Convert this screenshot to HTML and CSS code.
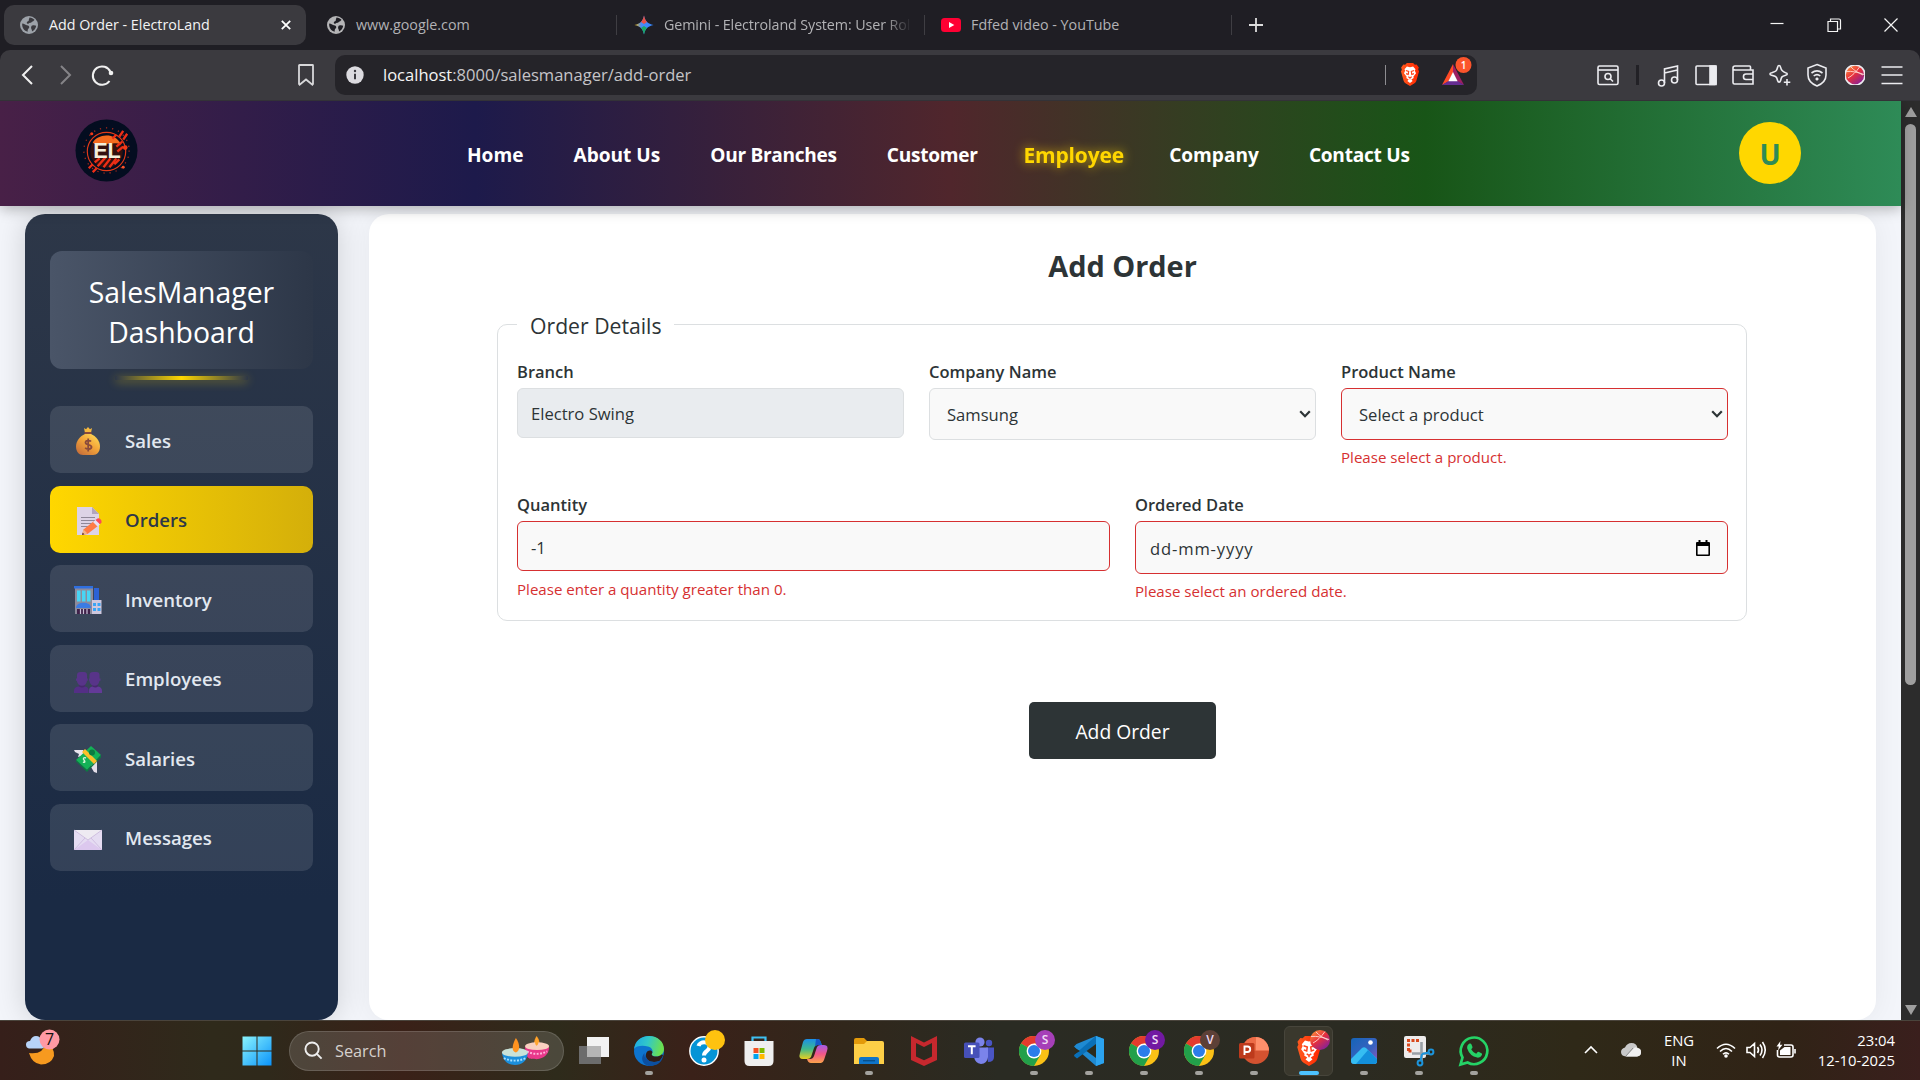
FILE: index.html
```html
<!DOCTYPE html>
<html lang="en">
<head>
<meta charset="utf-8">
<title>Add Order - ElectroLand</title>
<link rel="stylesheet" href="styles.css">
</head>
<body>
<svg class="defs" width="0" height="0" aria-hidden="true">
  <defs>
    <linearGradient id="gWin" x1="0" y1="0" x2="1" y2="1"><stop offset="0" stop-color="#8af4fd"/><stop offset="1" stop-color="#0a93fb"/></linearGradient>
    <linearGradient id="gFire" x1="0" y1="0" x2=".8" y2="1"><stop offset="0" stop-color="#ffa63c"/><stop offset=".5" stop-color="#e8303c"/><stop offset="1" stop-color="#7b1fa2"/></linearGradient>
    <linearGradient id="gBrave" x1="0" y1="0" x2="1" y2="0"><stop offset="0" stop-color="#ff5a1f"/><stop offset="1" stop-color="#ff2600"/></linearGradient>
    <linearGradient id="gGold" x1="1" y1="0" x2="0.2" y2="1"><stop offset="0" stop-color="#ffe35a"/><stop offset=".5" stop-color="#f4a63a"/><stop offset="1" stop-color="#c8703a"/></linearGradient>
    <symbol id="globe" viewBox="0 0 20 20">
      <circle cx="10" cy="10" r="9" fill="currentColor"/>
      <path d="M3.2 8.6c2.3.3 2.6 1.400 4.600 1.600 2 .2 2.600 1 2.400 2.200-.2 1.200-1.700 1-1.500 4.400-3.400-.6-5.900-4-5.500-8.200zM10.500 2.600c2 0 3.800.9 5.100 2.400-.8.200-1 1.300-2 1.500-1.100.2-1.100 1.400-2.400 1.300-1.500-.1-1.300 1.300-2.500 1-1.200-.2-1.200-1.800-.2-2.400 1-.5 1.500-.6 1.300-1.700zM13.200 10.500c1.500-.5 2.800-.3 4 .2-.3 2.600-2 4.700-4.200 5.700.3-1.600-.9-2.300-.9-3.500 0-1.200.3-2 1.100-2.400z" fill="var(--cut)"/>
    </symbol>
    <symbol id="lion" viewBox="0 0 22 26">
      <path d="M5.500 2 7.500 0h7l2 2 2-.3L21 5l-.8 2 1 2.500-3 10.500c-.6 1.500-1.500 2.400-2.500 3.100L11 26l-4.700-2.900c-1-.7-1.900-1.600-2.500-3.100L.8 9.500l1-2L1 5l2.500-3.300z" fill="url(#gBrave)"/>
      <path d="m7.500 4 3.500.7 3.500-.7 2.700 3.200-.7 1.500 1.300 2.800-3 4 .4 1.500-2.700 1.700 1.500 1.600L11 22.600l-3-2.300 1.500-1.600L6.800 17l.4-1.500-3-4 1.300-2.800-.7-1.500z" fill="#fff"/>
      <path d="m6.300 8.500 3.200 1-.5 3.500L6.500 12m9.200-3.500-3.200 1 .5 3.500 2.500-1M9 15.500l2 1.200 2-1.200M11 16.500v2" fill="none" stroke="#ff431a" stroke-width="1.300"/>
    </symbol>
    <symbol id="chrome" viewBox="0 0 30 30">
      <circle cx="15" cy="15" r="15" fill="#fbc116"/>
      <path d="M15 15 2 7.500A15 15 0 0 1 28 7.500H15z" fill="#e33b2e"/>
      <path d="M2 7.500A15 15 0 0 0 15 30l6.500-11.300L15 15z" fill="#22a04a"/>
      <path d="M15 7.500h13l-6.500 11.200z" fill="#fbc116"/>
      <circle cx="15" cy="15" r="7.400" fill="#fff"/><circle cx="15" cy="15" r="6" fill="#2b7de9"/>
    </symbol>
    <symbol id="ball" viewBox="0 0 20 20">
      <circle cx="10" cy="10" r="10" fill="url(#gFire)"/>
      <path d="M1 6.500c6-.5 11 .5 18 3M3 13c4-2 8-6 12-11.500M6 2c3 3.500 7 5.500 12 8" stroke="#ffd9d0" stroke-width=".9" fill="none"/>
    </symbol>
  </defs>
</svg>

<div class="tabs">
  <div class="tab tab-active"><svg class="fav fav-dim" viewBox="0 0 20 20"><use href="#globe"/></svg><span class="tab-text">Add Order - ElectroLand</span><svg class="tab-close" viewBox="0 0 10 10"><path d="m.8.8 8.400 8.400M9.200.8.800 9.200"/></svg></div>
  <div class="tab tab-google"><svg class="fav fav-gray" viewBox="0 0 20 20"><use href="#globe"/></svg><span class="tab-text">www.google.com</span></div>
  <div class="tab tab-gemini">
    <svg class="fav" viewBox="0 0 20 20"><defs><linearGradient id="gGem" x1="0" y1="0" x2="1" y2="0"><stop offset="0" stop-color="#fbbc05"/><stop offset=".35" stop-color="#4a8af4"/><stop offset="1" stop-color="#3186ff"/></linearGradient></defs><path d="M10 .5c1 5.500 4 8.500 9.500 9.500-5.500 1-8.500 4-9.500 9.500C9 14 6 11 .5 10 6 9 9 6 10 .5z" fill="url(#gGem)"/><path d="M10 .5c.6 3 1.500 5 3 6.500L10 9 7 7c1.500-1.500 2.400-3.500 3-6.500z" fill="#ea4f45"/><path d="M10 19.500c.6-3 1.500-5 3-6.500l-3-2-3 2c1.500 1.500 2.400 3.500 3 6.500z" fill="#19a866"/></svg>
    <span class="tab-text tab-fade">Gemini - Electroland System: User Rol</span>
  </div>
  <div class="tab tab-youtube"><svg class="fav-yt" viewBox="0 0 20 14"><rect width="20" height="14" rx="3.500" fill="#ff0033"/><path d="m8 4 5.300 3L8 10z" fill="#fff"/></svg><span class="tab-text">Fdfed video - YouTube</span></div>
  <svg class="new-tab" viewBox="0 0 14 14"><path d="M7 0v14M0 7h14"/></svg>
  <div class="win-controls">
    <svg viewBox="0 0 14 14"><path d="M.5 5.500h13"/></svg>
    <svg viewBox="0 0 14 14"><path d="M1 3.500h9.500v10H1zM3.500 3.500V1h8.500q1.500 0 1.500 1.500V11h-3"/></svg>
    <svg viewBox="0 0 14 14"><path d="m.5.5 13 13M13.500.5l-13 13"/></svg>
  </div>
</div>

<div class="toolbar">
  <div class="nav-buttons">
    <svg viewBox="0 0 24 24"><path d="m16 3-9 9 9 9"/></svg>
    <svg class="dim" viewBox="0 0 24 24"><path d="m8 3 9 9-9 9"/></svg>
    <svg viewBox="0 0 24 24"><path d="M19.500 18A9.200 9.200 0 1 1 20.500 9"/><circle cx="21" cy="10" r="2.300" fill="#f0f0f0" stroke="none"/></svg>
  </div>
  <svg class="bookmark" viewBox="0 0 16 22"><path d="M1 1.500q0-.5.500-.5h13q.5 0 .5.500V20l-.6.700L8 15.500l-6.400 5.200L1 20z"/></svg>
  <div class="urlbar">
    <svg class="info" viewBox="0 0 18 18"><circle cx="9" cy="9" r="8.700" fill="#dcdbe0"/><path d="M9 7.800v5.400" stroke="#3a393e" stroke-width="2"/><circle cx="9" cy="5" r="1.200" fill="#3a393e"/></svg>
    <span class="url"><b>localhost</b>:8000/salesmanager/add-order</span>
    <i class="url-sep"></i>
    <svg class="shield-lion" viewBox="0 0 22 26"><use href="#lion"/></svg>
    <svg class="rewards" viewBox="0 0 32 28"><path d="M12 6 1 27l6.500-3.500L12 15z" fill="#ff4a26"/><path d="m12 6 11 21-6.500-3.500L12 15z" fill="#9e1f63"/><path d="M1 27h22l-6.500-4h-9z" fill="#662d91"/><path d="m12 14 4.600 9.200H7.400z" fill="#fff"/><circle cx="22.500" cy="7" r="8" fill="#fb542b"/><text x="22.500" y="10.700" text-anchor="middle">1</text></svg>
  </div>
  <div class="tool-icons">
    <svg viewBox="0 0 22 22"><rect x="1" y="2" width="20" height="18.500" rx="1.500"/><path d="M1 6h20"/><circle cx="11" cy="12.500" r="3"/><path d="m13 14.500 3 3"/></svg>
    <i class="tool-sep"></i>
    <svg viewBox="0 0 22 22"><circle cx="4.500" cy="19" r="3"/><circle cx="17.500" cy="16" r="3"/><path d="M7.500 19V5l13-3v14M7.500 9l13-3"/></svg>
    <svg viewBox="0 0 22 22"><rect x="1" y="2" width="20" height="18.500" rx="1"/><path d="M15 2h6v18.500h-6z" fill="#ececf0"/></svg>
    <svg viewBox="0 0 22 22"><path d="M21 7V20H2.500Q1 20 1 18.500V4Q1 2 3 2h14.500q1 0 1 1v2.500M1 5.500Q2 6 3 6h18v2M21 10h-7q-2.500 0-2.500 2.500V13q0 2.500 2.500 2.500h7z"/></svg>
    <svg viewBox="0 0 22 22"><path d="M10 1.500q1.200 0 1.600 1.800 1 4.200 5 5.400c2.200.5 2.200 2 0 2.600-4 1.200-4 1.500-5 5.200-.6 2.200-2.400 2.200-3 0-1-4-2-4.300-6-5.300-2.200-.6-2.200-2 0-2.500 4-1.200 5-1.200 6-5.400Q9 1.500 10 1.500zM18 15v6.500M14.800 18.200h6.500"/></svg>
    <svg viewBox="0 0 22 22"><path d="m11 .5 9 3.500v7c0 5-4 9-9 11-5-2-9-6-9-11V4zM5.500 9c3.500-2.700 7.500-2.700 11 0M7.700 12c2-1.600 4.600-1.600 6.600 0"/><circle cx="11" cy="15" r="1.300" fill="#ececf0" stroke-width=".5"/></svg>
    <svg class="profile-ball" viewBox="0 0 20 20"><use href="#ball"/></svg>
    <svg viewBox="0 0 22 22"><path d="M.5 3h21M.5 11h21M.5 19.500h21"/></svg>
  </div>
</div>

<div class="viewport">
  <div class="page">
    <header class="site-header">
      <svg class="logo" viewBox="0 0 64 64">
        <circle cx="32" cy="32" r="31.500" fill="#040d20"/>
        <circle cx="32" cy="32" r="23" fill="none" stroke="#a82a1a" stroke-width="1.300" stroke-dasharray="1.300 5"/>
        <circle cx="32" cy="33" r="19.500" fill="none" stroke="#e03a18" stroke-width="1.200"/>
        <circle cx="32" cy="33" r="16.500" fill="#33110f"/>
        <path d="M18 24c4-8 22-12 29 2-9-4-20 3-29-2z" fill="#f46a1e"/>
        <path d="m20 44 5-4M23 48l8-9M29 49l7-9M35 49l7-9M40 46l5-5M38 20l4-4M42 28l6-5M43 33l6-5M45 18l4-6M49 21l4-6M14 50l4-4M18 54l4-4" stroke="#ee2e16" stroke-width="2.400" fill="none"/>
        <circle cx="51" cy="29" r="2.400" fill="#f33a18"/><circle cx="17" cy="15" r="1.600" fill="#f33a18"/><circle cx="49" cy="49" r="1.500" fill="#f6532a"/>
        <text x="32.500" y="40" text-anchor="middle">EL</text>
      </svg>
      <nav class="main-nav">
        <a>Home</a><a>About Us</a><a class="branches">Our Branches</a><a class="snug">Customer</a><a class="current">Employee</a><a>Company</a><a class="snug">Contact Us</a>
      </nav>
      <div class="user">U</div>
    </header>

    <div class="layout">
      <aside class="sidebar">
        <h2 class="side-title">SalesManager Dashboard</h2>
        <div class="side-list">
          <a class="side-item"><svg viewBox="0 0 28 28"><path d="m10 1 2 1.300L14 0l2 2.300L18 1l-.8 4h-6.400z" fill="#f7b93e"/><path d="M10.500 5h7v2.500h-7z" fill="#8a4b3c"/><path d="M11 7h6c5 2 9 7 9 12.500 0 5-3 8.500-7 8.500H9c-4 0-7-3.500-7-8.500C2 14 6 9 11 7z" fill="url(#gGold)"/><path d="M17 14.500c-1-1.300-5.500-1.500-5.500 1 0 3 6 1.500 6 4.500 0 2.700-5 2.500-6.300.8M14.200 11.500v13" stroke="#8a4b3c" stroke-width="1.800" fill="none"/></svg><span>Sales</span></a>
          <a class="side-item active"><svg viewBox="0 0 28 28"><path d="M3 0h15l7 7v21H3z" fill="#ddd3e6"/><path d="M18 0v7h7z" fill="#b3a5bd"/><path d="M7 10.500h14M7 13.500h14M7 16.500h12M7 19.500h8" stroke="#8f8799" stroke-width="1"/><path d="m8 28 1.500-5.500L20 14l4.500 4.500-11 8.500z" fill="#ff7a45"/><path d="m8 28 1.500-5.500 4 4z" fill="#f2b48a"/><path d="m8 28 .7-2.300 1.700 1.600z" fill="#3b2333"/><path d="m19 15 2.500-2 4.500 4.500-2.500 2z" fill="#e8e0f4"/><path d="m21.500 13 2-1.600q1.500-.8 3 .8t1 3.300L26 17.300z" fill="#fb4a58"/></svg><span>Orders</span></a>
          <a class="side-item"><svg viewBox="0 0 28 28"><path d="M20 2h5v14h-5z" fill="#2c62d6"/><path d="M1 2h18v26H1z" fill="#8d8b9c"/><path d="M0 0h19v2.500H0z" fill="#2f6fe0"/><path d="M3 4.500h3.500v11H3zM8 4.500h3.500v11H8zM13 4.500h3.500v11H13z" fill="#48d5f5"/><path d="M2 22c0-7 15-7 15 0z" fill="#3b7be3"/><path d="M3 23h13v5H3z" fill="#3f2149"/><path d="M6.500 23v5M9.500 23v5M13 23v5" stroke="#c9bfd6" stroke-width="1.200"/><path d="M18 14h9.500v14H18z" fill="#cfc8de"/><path d="M19 17h3v3h-3zM23.500 17h3v3h-3zM19 22h3v3h-3zM23.500 22h3v3h-3z" fill="#3aa5f5"/></svg><span>Inventory</span></a>
          <a class="side-item"><svg viewBox="0 0 28 28"><path d="M5 19h6v4H5zM18 19h6v4h-6z" fill="#46296d"/><path d="M2 12.500h1V9q0-3 3.500-3H10q3 0 3 3v3.500h.8v2.300H13q-.8 5-5 5t-5.200-5H2zM15 12.500h.5V9q0-3 3.500-3h3.500q3 0 3 3v3.500h1v2.300h-1q-.8 5-5 5t-5.200-5H15z" fill="#583489"/><path d="M0 27v-2q0-4.500 5-4.500 3 2 6 0 3.500.5 3.500 4V27z" fill="#542f86"/><path d="M15 27v-2.500q0-3.500 3.500-4 3 2 5.500 0 4 .5 4 4.500v2z" fill="#633a98"/></svg><span>Employees</span></a>
          <a class="side-item"><svg viewBox="0 0 28 28"><path d="M0 5h9l3 5-8 2 1-3-4-2z" fill="#e9e5ee"/><path d="m17 17 6-1v12l-3-1-3-5z" fill="#e4dfea"/><path d="m17 1 10 9-14 15-11-10z" fill="#14b257"/><path d="m2 15 11 10v2L2 16.500zM27 10v2.500L13 27v-2z" fill="#0c7a42"/><path d="m8 7 3-3 12 12-3 3z" fill="#fbc02a"/><circle cx="18" cy="7.500" r="3" fill="#0b7b41"/><path d="M12 13c-2-1-3.500.5-2 2s1 3-1 2" stroke="#d8f6d8" stroke-width="1.400" fill="none"/></svg><span>Salaries</span></a>
          <a class="side-item"><svg viewBox="0 0 28 28"><path d="M0 5h28v20H0z" fill="#e5dcf2"/><path d="m0 25 14-10 14 10z" fill="#dcc8ee"/><path d="m0 5 14 10L28 5z" fill="#eeeaf2"/><path d="m0 5 14 10L28 5M0 25l11-12M28 25 17 13" stroke="#c9b6dc" stroke-width=".8" fill="none"/></svg><span>Messages</span></a>
        </div>
      </aside>

      <main class="card">
        <h1>Add Order</h1>
        <fieldset class="details">
          <legend>Order Details</legend>
          <div class="row three">
            <div class="field"><label>Branch</label><div class="control readonly"><span>Electro Swing</span></div></div>
            <div class="field"><label>Company Name</label><div class="control select"><span>Samsung</span><svg viewBox="0 0 12 8"><path d="m1.200 1.200 4.800 5 4.800-5"/></svg></div></div>
            <div class="field"><label>Product Name</label><div class="control select invalid"><span>Select a product</span><svg viewBox="0 0 12 8"><path d="m1.200 1.200 4.800 5 4.800-5"/></svg></div><p class="error">Please select a product.</p></div>
          </div>
          <div class="row two">
            <div class="field"><label>Quantity</label><div class="control invalid"><span>-1</span></div><p class="error error-low">Please enter a quantity greater than 0.</p></div>
            <div class="field"><label>Ordered Date</label><div class="control date invalid"><span>dd-mm-yyyy</span><svg viewBox="0 0 16 18"><path d="M1 3q0-1 1-1h1.500V0h2v2h5V0h2v2H14q1 0 1 1v12q0 1-1 1H2q-1 0-1-1zM2.600 6v8.500h10.800V6z" fill="#000" fill-rule="evenodd"/></svg></div><p class="error">Please select an ordered date.</p></div>
          </div>
        </fieldset>
        <div class="submit">Add Order</div>
      </main>
    </div>
  </div>
  <div class="scrollbar"><i class="arrow-up"></i><i class="thumb"></i><i class="arrow-down"></i></div>
</div>

<footer class="taskbar">
  <svg class="weather" viewBox="0 0 40 40">
    <path d="M8 24q14 2 17-10 9 5 8 13-3 8.500-13 8.500-9-1-12-11.500z" fill="#f79a1f"/>
    <path d="M8 19.500q-3-.5-3-4T9 12q2-5 6-5 4.500 0 5.500 4.500 3.500 1 3.500 4t-3 4z" fill="#b7d3f8"/>
    <circle cx="28.500" cy="10.500" r="10" fill="#ff99a4"/><text x="28.500" y="16" text-anchor="middle">7</text>
  </svg>
  <svg class="start" viewBox="0 0 30 30"><path d="M.5.500h14v14H.5zM15.500.500h14v14h-14zM.5 15.500h14v14H.5zM15.500 15.500h14v14h-14z" fill="url(#gWin)"/></svg>
  <div class="search">
    <svg class="mag" viewBox="0 0 20 20"><circle cx="8.500" cy="8.500" r="7"/><path d="m13.500 13.500 5 5"/></svg>
    <span>Search</span>
    <svg class="diyas" viewBox="0 0 52 30"><path d="M37 0c4 5 4 10 0 11-4-1-3-6 0-11z" fill="#ff9d23"/><path d="M25 11c1 15 5 12 12 13 8-1 13-5 13-13z" fill="#e8388b"/><ellipse cx="37.500" cy="10.500" rx="12.500" ry="4" fill="#f9d0c0"/><path d="M27 16q10 5 21 0" stroke="#ffb5dc" stroke-width="2" stroke-dasharray="2 1.500" fill="none"/><path d="M37 1c3 5 2 8 0 9-2-1-2-4 0-9z" fill="#ffa530"/><path d="M1 17c1 9 6 13 13.500 13S27 26 28 17z" fill="#1b8fdc"/><ellipse cx="14.500" cy="17" rx="13.500" ry="4.500" fill="#c9e2d8"/><path d="M3 23q11 5 23 0" stroke="#a8e1ff" stroke-width="2" stroke-dasharray="2 1.500" fill="none"/><path d="M15.500 2c5 7 4 14 0 15-5-1-4-8 0-15z" fill="#ff9320"/></svg>
  </div>
  <div class="apps">
    <div class="app"><svg viewBox="0 0 30 30"><path d="M0 10h22v18H0z" fill="#6c6c6c"/><path d="M8 1h22v20H8z" fill="#f2f2f2"/><path d="M8 10h14v11H8z" fill="#b5b5b5"/></svg></div>
    <div class="app run"><svg viewBox="0 0 30 30"><defs><linearGradient id="gEd" x1="0" y1="0" x2="1" y2=".2"><stop offset="0" stop-color="#1aa7e8"/><stop offset=".5" stop-color="#32c8c8"/><stop offset="1" stop-color="#6be04f"/></linearGradient></defs><circle cx="15" cy="15" r="15" fill="#0d74cf"/><path d="M0 13C1 5 7 0 15 0c9 0 15 6 15 13 0 5-4 7.500-8 7.500-3.500 0-5-1.500-4-3 1.500-2 .5-6-4-7C8 9 2 10 0 13z" fill="url(#gEd)"/><path d="M10.500 17c-1 8 7 12 16 8-3 4-8 5.500-12 5-7-2-8-9-4-13z" fill="#0c4fa0"/><path d="M18 17.500c-1 1.500.5 3 4 3 2 0 4.500-.7 6-2.300l1 1.300c-1 3-3 5-3.500 5.500-8 3-15-1-13.500-7 .5-3 3-4 5-3.500 1.500 1 1.700 2 1 3z" fill="#2f1d18"/><path d="M12 18c-1 6 5 10 13.500 7l3.500-5q-1 6-6 8.500c-8 3-14-3-11-10.500z" fill="#0c4fa0"/></svg></div>
    <div class="app"><svg viewBox="0 0 30 30"><circle cx="15" cy="15" r="14.200" fill="#0594d6" stroke="#fff" stroke-width="1.400"/><path d="M9.500 10c1-5 11.500-5 11 1-.3 4.500-5.500 4-5.500 8.500" stroke="#fff" stroke-width="4" fill="none"/><circle cx="15" cy="24" r="2.500" fill="#fff"/></svg><i class="dot-badge"></i></div>
    <div class="app"><svg viewBox="0 0 30 30"><path d="M8.500 6V1.500h13V6" fill="none" stroke="#3ec0f2" stroke-width="2.200"/><path d="M.5 5h29v20q0 5-5 5h-19q-5 0-5-5z" fill="#efefef"/><path d="M9.500 12h5v5h-5z" fill="#f25022"/><path d="M15.500 12h5v5h-5z" fill="#7fba00"/><path d="M9.500 18h5v5h-5z" fill="#00a4ef"/><path d="M15.500 18h5v5h-5z" fill="#ffb900"/></svg></div>
    <div class="app"><svg viewBox="0 0 30 30"><defs><linearGradient id="gC1" x1="0" y1="0" x2="0" y2="1"><stop offset="0" stop-color="#1b8fe8"/><stop offset=".5" stop-color="#3fb88c"/><stop offset="1" stop-color="#e8d020"/></linearGradient><linearGradient id="gC2" x1="0" y1="0" x2="0" y2="1"><stop offset="0" stop-color="#a45ce8"/><stop offset=".5" stop-color="#f2568a"/><stop offset="1" stop-color="#fba34a"/></linearGradient></defs><path d="M8 3h11q2 0 3 4l1 2h-4q-3 0-4 3l-3 9q-1 2-4 2H4q-5 0-3-6L4 6q1-3 4-3z" fill="url(#gC1)"/><path d="M22 27H12q-3 0-4-4h3q3 0 4-3l3-9q1-2 4-2h3q5 0 3 6l-3 9q-1 3-3 3z" fill="url(#gC2)"/><path d="M17 3h2q2 0 3 4l1 2h-4q-2 0-3 1.500z" fill="#1559c8"/></svg></div>
    <div class="app run"><svg viewBox="0 0 30 30"><path d="M0 4q0-2 2-2h8l3 3v4H0z" fill="#e39a0a"/><path d="M0 8h10l3-3h15q2 0 2 2v21H0z" fill="#fdcf47"/><path d="M5 28v-5q0-2 2-2h16q2 0 2 2v5z" fill="#0f74c8"/><path d="M9 24.700h12" stroke="#07508c" stroke-width="1.400"/></svg></div>
    <div class="app"><svg viewBox="0 0 30 30"><path d="m2 0 13 6.500L28 0v24l-13 6-13-6zM7 7v13.500l8 3.800 8-3.800V7l-8 4z" fill="#c6282e" fill-rule="evenodd"/></svg></div>
    <div class="app"><svg viewBox="0 0 30 30"><circle cx="25" cy="7" r="3.200" fill="#4a55c4"/><circle cx="16" cy="6" r="4.600" fill="#7b83eb"/><path d="M22 11.500h8V21q0 5-6 5z" fill="#4a55c4"/><path d="M10 11.500h14V21q-1 7-7 7-6-1-7-7z" fill="#7b83eb"/><rect y="6.500" width="15.500" height="15.500" rx="1.500" fill="#4650b8"/><path d="M4 10.300h7.600M7.800 10.300v8" stroke="#fff" stroke-width="2"/></svg></div>
    <div class="app run"><svg viewBox="0 0 30 30"><use href="#chrome"/></svg><b class="who lilac">S</b></div>
    <div class="app run"><svg viewBox="0 0 30 30"><path d="m22 0 8 3v24l-8 3L2 12.500 0 10.500 2.500 8z" fill="#1f8ad2"/><path d="m22 0 .5 8L3 22.500 0 20l.5-1.500z" fill="#0a70b8"/><path d="M22 8v14l-9.500-7z" fill="#2b2b1e"/><path d="M0 11.500V18.500L6 15z" fill="#2b2b1e"/><path d="m22 0 8 3v24l-8 3z" fill="#2ba3ef"/></svg></div>
    <div class="app run"><svg viewBox="0 0 30 30"><use href="#chrome"/></svg><b class="who purple">S</b></div>
    <div class="app run"><svg viewBox="0 0 30 30"><use href="#chrome"/></svg><b class="who brown">V</b></div>
    <div class="app run"><svg viewBox="0 0 30 30"><circle cx="16.500" cy="14.500" r="13.500" fill="#d35230"/><path d="M16.500 1A13.500 13.500 0 0 1 30 14.500H16.500z" fill="#ff8f6b"/><path d="M16.500 1v13.500H3A13.500 13.500 0 0 1 16.500 1z" fill="#ed6c47"/><rect y="7" width="15.500" height="15.500" rx="1.500" fill="#bd3a1c"/><path d="M5.500 19v-8.500h3q2.700 0 2.700 2.700T8.500 16h-3" fill="none" stroke="#fff" stroke-width="1.900"/></svg></div>
    <div class="app run selected"><svg viewBox="0 0 26 30"><use href="#lion"/></svg><svg class="over-ball" viewBox="0 0 20 20"><use href="#ball"/></svg></div>
    <div class="app run"><svg viewBox="0 0 30 30"><defs><linearGradient id="gPh" x1="0" y1="0" x2="1" y2="1"><stop offset="0" stop-color="#1564b8"/><stop offset=".6" stop-color="#3a62c0"/><stop offset="1" stop-color="#9a55b8"/></linearGradient></defs><rect x="2" y="2" width="26" height="26" rx="3" fill="url(#gPh)"/><path d="m2 23 11-11q2-1.500 4 0l11 11v2q0 3-3 3H5q-3 0-3-3z" fill="#35bdf2"/><path d="m7 28 12-14 9 9v2q0 3-3 3z" fill="#1390dc"/><circle cx="21.500" cy="6.500" r="2.300" fill="#fff"/></svg></div>
    <div class="app run"><svg viewBox="0 0 30 30"><rect width="22" height="22" rx="2" fill="#eeecec"/><path d="M4.500 15V4.500H16M4.500 15h4" fill="none" stroke="#d9481c" stroke-width="3" stroke-dasharray="3 1.500"/><path d="M17.500 6v19M8 17.500h18" stroke="#9aa0a6" stroke-width="2.600" fill="none"/><circle cx="27" cy="16" r="2.400" fill="none" stroke="#1c94dc" stroke-width="2"/><circle cx="16" cy="27" r="2.400" fill="none" stroke="#1c94dc" stroke-width="2"/><path d="m18 18 7-1.500M18 18l-1.500 7" stroke="#1c94dc" stroke-width="2"/></svg></div>
    <div class="app run"><svg viewBox="0 0 30 30"><path d="m1.500 28.500 2-7A13.300 13.300 0 1 1 8.600 26.500z" fill="none" stroke="#25d366" stroke-width="2.700"/><path d="M10.500 7.500q1.500-.5 2 1l1 2.500q.3.800-1.300 2.300 1.800 3.300 5 4.500l1.500-1.700q.6-.5 1.300-.2l2.500 1.300q.9.500.4 1.800-1.400 3-4.700 2.600-7.500-1.500-10-9-.5-3.500 2.300-5.100z" fill="#25d366"/></svg></div>
  </div>
  <div class="tray">
    <svg class="chev" viewBox="0 0 14 8"><path d="m1 7 6-6 6 6"/></svg>
    <svg class="cloud" viewBox="0 0 20 14"><path d="M5 13.500Q0 13 0 9q0-3.500 4-4.500Q6 0 10.500 0q5 0 6 5 3.500.5 3.500 4.300t-4 4.200z" fill="#c9c9c9"/><path d="M5 13.500 13 5q1.500-1.300 3.500 0 3.500.5 3.500 4.300t-4 4.200z" fill="#f1f1f1"/><path d="m5 13 7-8" stroke="#8c8c8c" stroke-width="1"/></svg>
    <div class="lang">ENG<br>IN</div>
    <svg class="wifi" viewBox="0 0 20 16"><path d="M1 6.500q9-8.500 18 0M4 9.500q6-6 12 0M7 12.300q3-3 6 0"/><circle cx="10" cy="14" r="1.800" fill="#fff" stroke="none"/></svg>
    <svg class="spk" viewBox="0 0 20 18"><path d="M1 6.500h3l4.500-4v13L4 11.500H1zM11.500 6q2 3 0 6M14 3.500q4 5.500 0 11M16.500 1q5.500 8 0 16"/></svg>
    <svg class="bat" viewBox="0 0 20 18"><path d="M8 4h7q2 0 2 2v8q0 2-2 2H3.500q-2 0-2-2V9M19 8v4.500"/><path d="M4 14V9.500L8.500 6H14.500v8z" fill="#fff" stroke="none"/><path d="M4.500 0 .5 5.500h2.300L2 9.500l4.500-5.700H4z" fill="#fff" stroke="none"/></svg>
    <div class="clock">23:04<br>12-10-2025</div>
  </div>
</footer>
</body>
</html>
```
FILE: styles.css
```css
* { box-sizing: border-box; }
body {
  margin: 0;
  width: 1920px;
  height: 1080px;
  overflow: hidden;
  display: flex;
  flex-direction: column;
  background: #1f1e24;
  font-family: "Open Sans", "Noto Sans", sans-serif;
  color: #2d3436;
}
svg { display: block; flex: none; overflow: visible; }
.defs { position: absolute; }
i { font-style: normal; flex: none; }
span, a { white-space: nowrap; }

/* Tab strip */
.tabs { height: 50px; padding: 5px 22px 5px 4px; display: flex; align-items: center; background: #1f1e24; }
.tab { height: 40px; display: flex; align-items: center; color: #b2b2b5; }
.tab-active { width: 302px; margin-right: 13px; padding: 0 15px; border-radius: 10px; background: #3b3a3f; color: #f3f3f4; }
.tab-google { width: 298px; padding-left: 7px; border-right: 1px solid #3f3e43; }
.tab-gemini { width: 308px; padding-left: 17px; border-right: 1px solid #3f3e43; }
.tab-youtube { width: 307px; padding-left: 16px; border-right: 1px solid #3f3e43; }
.tab-google, .tab-gemini, .tab-youtube { height: 20px; }
.fav { width: 20px; height: 20px; margin-right: 10px; color: #b4b4b6; --cut: #1f1e24; }
.fav-dim { color: #9da2a9; --cut: #3b3a3f; }
.fav-yt { width: 20px; height: 14px; margin-right: 10px; }
.tab-text { padding-bottom: 2px; font-size: 14.3px; }
.tab-fade { width: 250px; -webkit-mask-image: linear-gradient(90deg, #000 88%, transparent 99%); mask-image: linear-gradient(90deg, #000 88%, transparent 99%); letter-spacing: -.1px; }
.tab-close { width: 10px; height: 10px; margin-left: auto; stroke: #fff; stroke-width: 1.8; fill: none; }
.new-tab { width: 14px; height: 14px; margin-left: 17px; stroke: #ddd; stroke-width: 1.8; }
.win-controls { margin-left: auto; display: flex; gap: 43px; }
.win-controls svg { width: 14px; height: 14px; fill: none; stroke: #f5f5f5; stroke-width: 1.2; }

/* Address toolbar */
.toolbar { height: 51px; padding: 0 17px 1px 16px; display: flex; align-items: center; background: #3b3a3f; border-radius: 10px 10px 0 0; border-bottom: 1px solid #333237; }
.nav-buttons { display: flex; gap: 13px; }
.nav-buttons svg { width: 24px; height: 24px; fill: none; stroke: #f0f0f0; stroke-width: 2; }
.nav-buttons .dim { stroke: #858488; }
.bookmark { width: 16px; height: 22px; margin-left: 184px; fill: none; stroke: #d8d8da; stroke-width: 1.8; }
.urlbar { width: 1142px; height: 40px; margin-left: 21px; padding: 0 12px 0 11px; display: flex; align-items: center; border-radius: 10px; background: #252429; }
.info { width: 18px; height: 18px; }
.url { margin-left: 19px; margin-right: auto; font-size: 16.55px; color: #c5c5c8; }
.url b { font-weight: 400; color: #f5f5f5; }
.url-sep { width: 1.5px; height: 20px; background: #8e8d91; }
.shield-lion { width: 20px; height: 23px; margin-left: 14px; }
.rewards { width: 32px; height: 28px; margin: -5px -8px 0 21px; }
.rewards text { font: 600 10px "Open Sans", sans-serif; fill: #fff; }
.tool-icons { margin-left: auto; display: flex; align-items: center; gap: 15.3px; }
.tool-icons svg { width: 22px; height: 22px; fill: none; stroke: #ececf0; stroke-width: 1.6; }
.tool-icons .profile-ball { width: 20px; height: 20px; margin: 0 1px; }
.tool-sep { width: 3px; height: 20px; margin: 0 3px 0 2px; background: #222126; }

/* Browser viewport */
.viewport { height: 919px; display: flex; overflow: hidden; }
.page { width: 1901px; background: #f3f5fa; }
.scrollbar { width: 19px; padding: 6px 0 5px; display: flex; flex-direction: column; align-items: center; background: #2c2c2c; }
.arrow-up, .arrow-down { border: 6px solid transparent; border-top: 0; border-bottom: 10px solid #9f9f9f; }
.arrow-down { margin-top: auto; border-bottom: 0; border-top: 10px solid #9f9f9f; }
.thumb { width: 11px; height: 561px; margin-top: 7px; border-radius: 6px; background: #9f9f9f; }

.site-header {
  position: relative;
  z-index: 1;
  height: 105px;
  padding: 0 100px 0 75px;
  display: flex;
  align-items: center;
  background: linear-gradient(90deg, #482047, #1d1a4b 25%, #50262c 50%, #185517 75%, #2e8b57);
  box-shadow: 0 3px 13px rgba(0, 0, 0, .28);
}
.logo { width: 63px; height: 63px; margin-top: -6px; }
.logo text { font: 700 22px "Liberation Sans", sans-serif; fill: #f3efdc; }
.main-nav { width: 1000px; display: flex; gap: 50px; margin: 2px auto 0 329px; font-size: 19.1px; line-height: 26px; font-weight: 700; color: #fff; }
.main-nav .branches { letter-spacing: -.3px; }
.main-nav .snug { letter-spacing: -.26px; }
.main-nav .current { color: #ffd700; letter-spacing: -.15px; transform: scale(1.1); text-shadow: 0 0 10px rgba(255, 215, 0, .75); }
.user { width: 62px; height: 62px; margin-top: -1px; border-radius: 50%; background: #ffd700; color: #2e8b57; font-size: 28px; font-weight: 700; line-height: 64px; text-align: center; }

.layout { height: 814px; padding: 8px 25px 0; display: flex; gap: 31px; }
.sidebar { width: 313px; height: 806px; padding: 37px 25px; border-radius: 20px; background: linear-gradient(#2d3748, #1a2a44 85%); box-shadow: 0 0 30px rgba(0, 0, 0, .16); }
.side-title { position: relative; margin: 0 0 37px; height: 118px; padding: 21px 20px 17px; border-radius: 12px; background: linear-gradient(90deg, #4a5568, #2d3748); color: #fff; font-size: 28.4px; font-weight: 400; line-height: 40px; text-align: center; }
.side-title::after { content: ""; position: absolute; left: 65px; bottom: -11px; width: 133px; height: 4px; border-radius: 2px; background: linear-gradient(90deg, #2d3748, #ffd700, #2d3748); box-shadow: 0 2px 10px rgba(255, 215, 0, .4); }
.side-list { display: flex; flex-direction: column; gap: 12.6px; }
.side-item { height: 67px; padding-left: 24px; display: flex; align-items: center; gap: 23px; border-radius: 10px; background: rgba(255, 255, 255, .11); color: #e2e8f0; font-size: 18.6px; font-weight: 600; }
.side-item span { padding-top: 1px; }
.side-item svg { width: 28px; height: 28px; margin-top: 3px; }
.side-item.active { background: linear-gradient(90deg, #ffd700, #d4af0a); color: #2d3748; }

.card { width: 1507px; height: 806px; padding: 32px 128px 0; border-radius: 20px; background: #fff; box-shadow: 0 0 30px rgba(0, 0, 0, .06); display: flex; flex-direction: column; }
.card h1 { margin: 0 0 23px; font-size: 28.9px; line-height: 40px; font-weight: 700; text-align: center; }
.details { margin: 0; width: 1250px; border: 1px solid #dcdfe1; border-radius: 10px; padding: 20px 18px 19px 19px; display: block; }
.details legend { height: 31px; padding: 3px 12px 0 13px; font-size: 21.2px; line-height: 28px; }
.row { display: grid; column-gap: 25px; }
.three { grid-template-columns: repeat(3, 1fr); }
.two { grid-template-columns: repeat(2, 1fr); margin-top: 26px; }
.field label { display: block; height: 24px; margin-bottom: 4px; line-height: 24px; font-size: 16.5px; font-weight: 600; }
.control { height: 50px; padding: 0 13px; display: flex; align-items: center; border: 1px solid #dcdfe1; border-radius: 6px; background: #f9f9f9; font-size: 16.6px; }
.control span { padding-top: 2px; }
.readonly { background: #e9ecef; }
.readonly span { padding-top: 1px; }
.select { height: 52px; padding: 0 4px 0 17px; justify-content: space-between; }
.select span { padding-top: 1px; }
.select svg { width: 12px; height: 8px; fill: none; stroke: #2d3436; stroke-width: 2.2; }
.date { height: 53px; padding-left: 14px; padding-right: 16px; justify-content: space-between; }
.date span { padding-top: 1px; letter-spacing: .85px; }
.date svg { width: 16px; height: 18px; margin-top: 2px; }
.invalid { border-color: #d63031; }
.error { margin: 7px 0 0; height: 20px; font-size: 15.1px; line-height: 20px; color: #d63031; white-space: nowrap; }
.error-low { margin-top: 8px; }
.submit { width: 187px; height: 57px; margin: 81px 0 0 532px; border-radius: 5px; background: #2d3436; color: #fff; font-size: 19.300px; line-height: 60px; text-align: center; }

/* Taskbar */
.taskbar { height: 60px; padding: 0 25px 0 21px; display: flex; align-items: center; color: #fff; border-top: 1px solid #4a443c; background: linear-gradient(90deg, #361f1a, #2f2a1b 11%, #2f291b 14%, #3a2118 21%, #2e2b1b 29%, #3a2119 36%, #31271b 44%, #2a2b23 52%, #2b2b22 70%, #2f2918 82%, #302316 93%, #3a1f1d); }
.weather { width: 40px; height: 40px; margin-top: -3px; }
.weather text { font: 16px "Open Sans", sans-serif; fill: #111; }
.start { width: 30px; height: 30px; margin-left: 181px; }
.search { width: 275px; height: 40px; margin: 0 2px 0 17px; padding: 0 12px 0 14px; display: flex; align-items: center; border: 1px solid rgba(255, 255, 255, .14); border-radius: 20px; background: rgba(255, 255, 255, .14); }
.mag { width: 19px; height: 19px; fill: none; stroke: #eee; stroke-width: 2; }
.search span { margin: 0 auto 0 12px; font-size: 16.3px; color: #d6d1cd; }
.diyas { width: 50px; height: 29px; }
.apps { display: flex; }
.app { position: relative; width: 55px; height: 60px; display: flex; align-items: center; justify-content: center; }
.app svg { width: 30px; height: 30px; }
.run::after { content: ""; position: absolute; bottom: 6px; left: 23.5px; width: 8px; height: 4px; border-radius: 2px; background: #a3a29e; }
.selected { z-index: 0; }
.selected::before { content: ""; position: absolute; z-index: -1; inset: 5px 3px 5px; border: 1px solid #47453b; border-radius: 6px; background: #3a382d; }
.selected::after { left: 17.5px; width: 20px; background: #4cc2ff; }
.app .over-ball { position: absolute; left: 29px; top: 9px; width: 20px; height: 20px; }
.dot-badge { position: absolute; left: 29px; top: 9px; width: 20px; height: 20px; border-radius: 50%; background: #ffc20f; }
.who { position: absolute; left: 29px; top: 9px; width: 20px; height: 20px; border-radius: 50%; font-size: 12px; line-height: 20px; font-weight: 600; text-align: center; color: #f0dcf4; }
.lilac { background: #a63fb8; }
.purple { background: #7219a2; }
.brown { background: #5d4037; }
.tray { margin-left: auto; display: flex; align-items: center; margin-top: -2px; font-size: 14.8px; line-height: 20px; }
.tray svg { fill: none; stroke: #fff; stroke-width: 1.6; }
.chev { width: 14px; height: 8px; }
.cloud { width: 20px; height: 14px; margin-left: 23px; }
.tray .cloud { stroke: none; }
.lang { margin-left: 23px; width: 30px; text-align: center; }
.wifi { width: 20px; height: 16px; margin-left: 22px; }
.spk { width: 20px; height: 18px; margin-left: 10px; }
.bat { width: 20px; height: 18px; margin-left: 10px; }
.clock { margin-left: 20px; width: 79px; text-align: right; white-space: nowrap; }
```
